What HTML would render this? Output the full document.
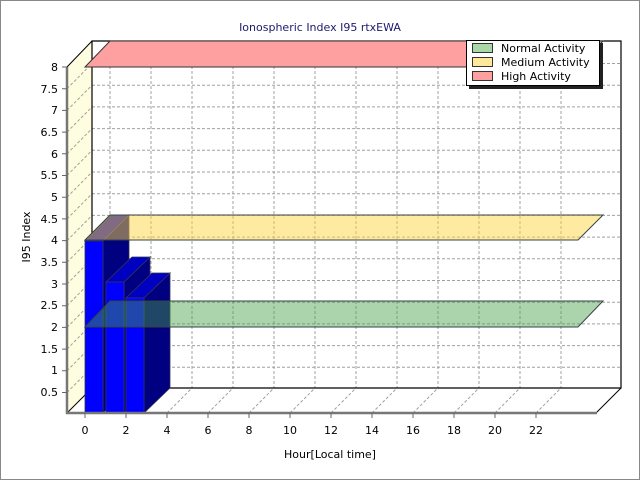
<!DOCTYPE html>
<html><head><style>
html,body{margin:0;padding:0;background:#fff}
svg{display:block}
text{font-family:"DejaVu Sans","Liberation Sans",sans-serif;font-size:11px;fill:#000}
</style></head><body>
<svg width="640" height="480" viewBox="0 0 640 480" xmlns="http://www.w3.org/2000/svg">
<rect x="0.5" y="0.5" width="639" height="479" fill="#fff" stroke="#888"/>
<text x="320" y="31" text-anchor="middle" style="fill:#1a1a6e">Ionospheric Index I95 rtxEWA</text>
<polygon points="67,67 92,41 92,388 67,413" fill="#fffde0"/>
<g stroke="#a0a0a0" stroke-dasharray="3,2" stroke-width="1" fill="none">
<path d="M92,63.5H621M92,85.2H621M92,106.9H621M92,128.6H621M92,150.3H621M92,172H621M92,193.7H621M92,215.4H621M92,237.1H621M92,258.8H621M92,280.5H621M92,302.2H621M92,323.9H621M92,345.6H621M92,367.3H621"/>
<path d="M110,41V388M151,41V388M192,41V388M233,41V388M274,41V388M315,41V388M356,41V388M397,41V388M438,41V388M479,41V388M520,41V388M561,41V388"/>
<path d="M85,413L110,388M126,413L151,388M167,413L192,388M208,413L233,388M249,413L274,388M290,413L315,388M331,413L356,388M372,413L397,388M413,413L438,388M454,413L479,388M495,413L520,388M536,413L561,388"/>
<path d="M67,88.7L92,63.5M67,110.4L92,85.2M67,132.1L92,106.9M67,153.8L92,128.6M67,175.5L92,150.3M67,197.2L92,172M67,218.9L92,193.7M67,240.6L92,215.4M67,262.3L92,237.1M67,284L92,258.8M67,305.7L92,280.5M67,327.4L92,302.2M67,349.1L92,323.9M67,370.8L92,345.6M67,392.5L92,367.3"/>
</g>
<path d="M92,41H621V388H92Z" fill="none" stroke="#000" stroke-width="1.2"/>
<path d="M67,67L92,41M67,413L92,388M596,413L621,388" stroke="#000" stroke-width="1" fill="none"/>
<polygon points="85,67 110,41 603,41 578,67" fill="#ffa0a0" stroke="#333"/>
<g stroke="#333355" stroke-width="0.8">
<polygon points="103,241 129,215 129,388 103,413" fill="#000080"/>
<polygon points="85,241 103,241 129,215 111,215" fill="#0000c0"/>
<rect x="85" y="241" width="18" height="172" fill="#0000ff"/>
<polygon points="124,282 150,257 150,388 124,413" fill="#000080"/>
<polygon points="106,282 124,282 150,257 132,257" fill="#0000c0"/>
<rect x="106" y="282" width="18" height="131" fill="#0000ff"/>
<polygon points="144,298 170,273 170,388 144,413" fill="#000080"/>
<polygon points="126,298 144,298 170,273 152,273" fill="#0000c0"/>
<rect x="126" y="298" width="18" height="115" fill="#0000ff"/>
</g>
<polygon points="85,240 110,215 603,215 578,240" fill="rgba(255,214,70,0.5)" stroke="#334444"/>
<polygon points="85,327 110,301 603,301 578,327" fill="rgba(70,160,70,0.45)" stroke="#334444"/>
<path d="M67,67V414M66,413H597" stroke="#777" stroke-width="2.5" fill="none"/>
<g stroke="#666" stroke-width="1">
<path d="M62,67H67M62,88.7H67M62,110.4H67M62,132.1H67M62,153.8H67M62,175.5H67M62,197.2H67M62,218.9H67M62,240.6H67M62,262.3H67M62,284H67M62,305.7H67M62,327.4H67M62,349.1H67M62,370.8H67M62,392.5H67"/>
<path d="M85,413V418M126,413V418M167,413V418M208,413V418M249,413V418M290,413V418M331,413V418M372,413V418M413,413V418M454,413V418M495,413V418M536,413V418"/>
</g>
<g text-anchor="end">
<text x="58" y="71">8</text><text x="58" y="93">7.5</text><text x="58" y="114">7</text><text x="58" y="136">6.5</text><text x="58" y="158">6</text><text x="58" y="179">5.5</text><text x="58" y="201">5</text><text x="58" y="223">4.5</text><text x="58" y="244">4</text><text x="58" y="266">3.5</text><text x="58" y="288">3</text><text x="58" y="309">2.5</text><text x="58" y="331">2</text><text x="58" y="353">1.5</text><text x="58" y="374">1</text><text x="58" y="396">0.5</text>
</g>
<g text-anchor="middle">
<text x="85" y="434">0</text><text x="126" y="434">2</text><text x="167" y="434">4</text><text x="208" y="434">6</text><text x="249" y="434">8</text><text x="290" y="434">10</text><text x="331" y="434">12</text><text x="372" y="434">14</text><text x="413" y="434">16</text><text x="454" y="434">18</text><text x="495" y="434">20</text><text x="536" y="434">22</text>
<text x="330" y="458">Hour[Local time]</text>
</g>
<text transform="translate(30,237) rotate(-90)" text-anchor="middle">I95 Index</text>
<rect x="469" y="43" width="134" height="46" fill="#222"/>
<rect x="466.5" y="40.5" width="133" height="45" fill="#fff" stroke="#000"/>
<rect x="472.5" y="43.5" width="20" height="9" fill="#a8d8a8" stroke="#333"/>
<rect x="472.5" y="57.5" width="20" height="9" fill="#ffe89a" stroke="#333"/>
<rect x="472.5" y="71.5" width="20" height="9" fill="#ffa0a0" stroke="#333"/>
<text x="501" y="52">Normal Activity</text>
<text x="501" y="66">Medium Activity</text>
<text x="501" y="80">High Activity</text>
</svg>
</body></html>
